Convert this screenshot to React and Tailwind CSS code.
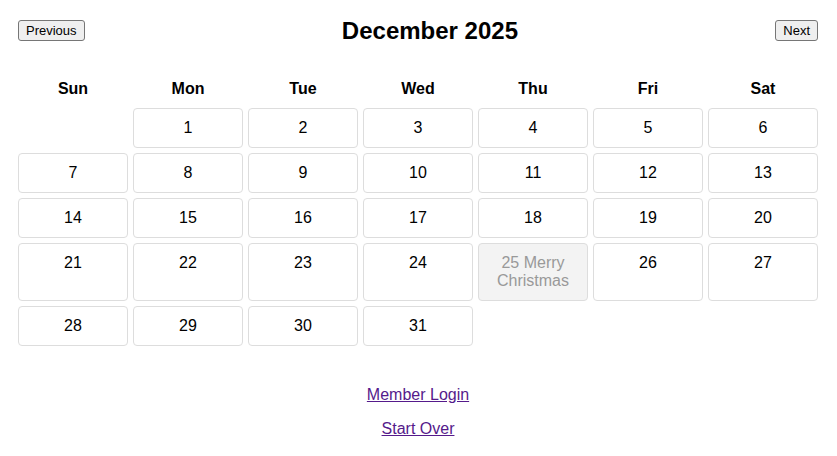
import React from "react";

const dayNames = ["Sun", "Mon", "Tue", "Wed", "Thu", "Fri", "Sat"];

export default function App() {
  // December 2025 starts on Monday
  const cells = [null];
  for (let d = 1; d <= 31; d++) cells.push(d);

  return (
    <div
      className="min-h-screen bg-white pl-[18px] pr-[19px] text-black"
      style={{ fontFamily: '"Liberation Sans", Arial, sans-serif' }}
    >
      {/* Header */}
      <div className="flex items-center justify-between pt-[20px] h-[41px]">
        <button className="h-[21px] px-[7px] text-[13px] leading-[15px] bg-[#efefef] border border-[#767676] rounded-[3px]">
          Previous
        </button>
        <h1 className="text-[24px] font-bold leading-[28px]">December 2025</h1>
        <button className="h-[21px] px-[7px] text-[13px] leading-[15px] bg-[#efefef] border border-[#767676] rounded-[3px]">
          Next
        </button>
      </div>

      {/* Calendar */}
      <div className="grid grid-cols-7 gap-[5px] mt-[39px]">
        {dayNames.map((n) => (
          <div key={n} className="h-[23px] text-center font-bold text-[16px] leading-[18px]">
            {n}
          </div>
        ))}
        {cells.map((d, i) =>
          d === null ? (
            <div key={"e" + i} />
          ) : d === 25 ? (
            <div
              key={d}
              className="border border-[#dddddd] rounded-[4px] bg-[#f3f3f3] text-[#999999] p-[10px] text-center text-[16px] leading-[18px]"
            >
              25 Merry Christmas
            </div>
          ) : (
            <div
              key={d}
              className="border border-[#dddddd] rounded-[4px] bg-white p-[10px] text-center text-[16px] leading-[18px]"
            >
              {d}
            </div>
          )
        )}
      </div>

      {/* Links */}
      <div className="text-center text-[16px] leading-[18px] mt-[40px]">
        <p>
          <a href="#" className="text-[#551a8b] underline">Member Login</a>
        </p>
        <p className="mt-[16px]">
          <a href="#" className="text-[#551a8b] underline">Start Over</a>
        </p>
      </div>
    </div>
  );
}
